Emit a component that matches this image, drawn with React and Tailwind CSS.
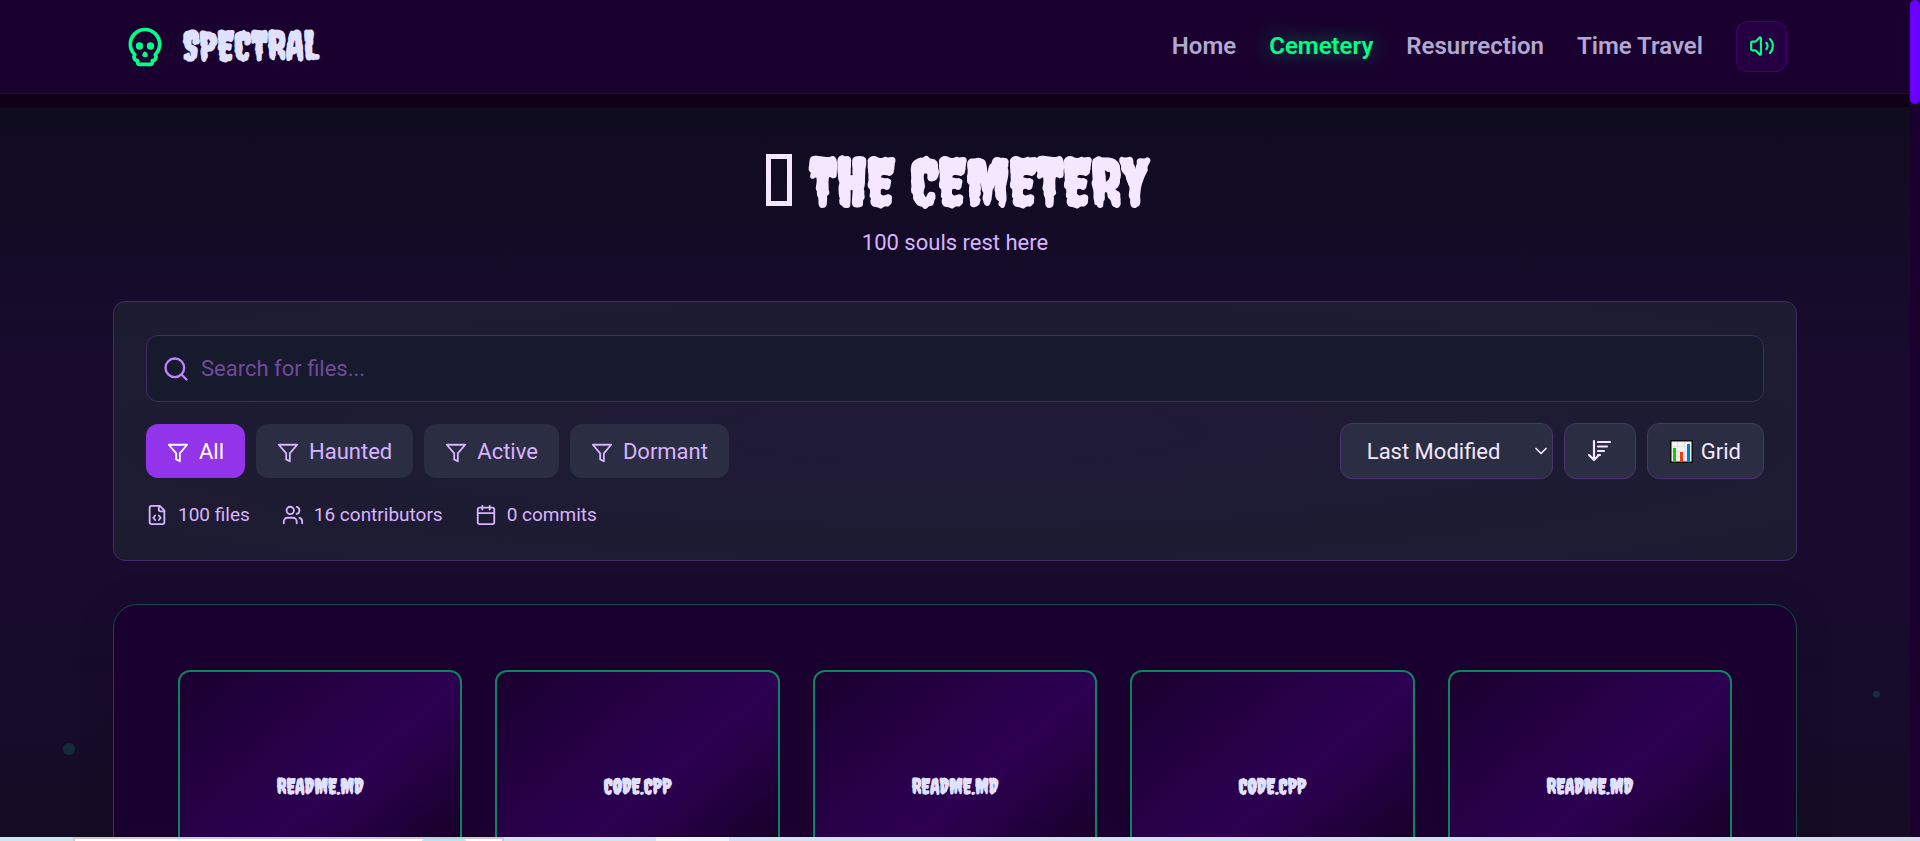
import { useState } from 'react';
import { LuSkull, LuVolume2, LuSearch, LuUsers, LuCalendar, LuFileCode, LuChevronDown } from 'react-icons/lu';

const navLinks = ['Home', 'Cemetery', 'Resurrection', 'Time Travel'];
const filters = ['All', 'Haunted', 'Active', 'Dormant'];
const stones = ['README.md', 'code.cpp', 'README.md', 'code.cpp', 'README.md'];

function FilterIcon() {
    return (
        <svg viewBox="0 0 24 24" className="mt-1 size-[22px]" fill="none" stroke="currentColor" strokeWidth="2" strokeLinecap="round" strokeLinejoin="round">
            <path d="M22 3H2l8 9.46V19l4 2v-8.54z" />
        </svg>
    );
}

function SortIcon() {
    return (
        <svg viewBox="0 0 24 24" className="size-6" fill="none" stroke="currentColor" strokeWidth="2.2" strokeLinecap="round" strokeLinejoin="round">
            <path d="M6 2v19M1 16l5 5 5-5M10 3h12M10 7.5h9M10 12h6M10 16h2" />
        </svg>
    );
}

function ChartIcon() {
    return (
        <svg viewBox="0 0 23 23" className="size-[23px]">
            <rect x="0.75" y="0.75" width="21.5" height="21.5" fill="#f2f2f2" stroke="#0c0c0c" strokeWidth="1.5" />
            <path d="M2 6.5h19M2 11.5h19M2 16.5h19M7.5 2v19M14.5 2v19" stroke="#e2e2e2" />
            <rect x="3" y="8" width="3" height="13.5" fill="#16c60c" />
            <rect x="10" y="12" width="3" height="9.5" fill="#f03a17" />
            <rect x="17" y="4" width="3" height="17.5" fill="#0078d7" />
        </svg>
    );
}

export default function App() {
    const [filter, setFilter] = useState('All');
    const [query, setQuery] = useState('');

    return (
        <div className="flex h-screen flex-col overflow-hidden bg-[#150c26] font-[Roboto,sans-serif] text-[22px] text-[#f3e8ff]">
            <div className="flex min-h-0 flex-1">
                <div className="relative flex min-w-0 flex-1 flex-col overflow-hidden bg-[linear-gradient(#0f0c1e_100px,#180b2e_360px,#180b2e_600px,#150c24_841px)]">
                    <span className="absolute bottom-[82px] left-[63px] size-3 rounded-full bg-[#122c38]" />
                    <span className="absolute right-[30px] bottom-[139px] size-[7px] rounded-full bg-[#122f3a]" />

                    <header className="border-b border-[#26063f] bg-[#1a002e] shadow-[0_13px_0_#0f0018]">
                        <div className="mx-auto flex h-[93px] max-w-[1684px] items-center justify-between px-[10px] pb-px">
                            <a href="#" className="flex items-center gap-4">
                                <LuSkull className="size-11 text-[#00ff88]" />
                                <span className="font-[Creepster,sans-serif] text-[40px] leading-none font-bold text-[#e0e0ff]">SPECTRAL</span>
                            </a>
                            <nav className="flex items-center gap-[33px] text-2xl font-semibold text-[#b0a8d0]">
                                {navLinks.map((link) => (
                                    <a
                                        key={link}
                                        href="#"
                                        className={link === 'Cemetery' ? 'text-[#00ff88] [text-shadow:0_0_20px_#00ff8880]' : ''}
                                    >
                                        {link}
                                    </a>
                                ))}
                                <button aria-label="Toggle sound" className="flex size-[51px] items-center justify-center rounded-xl border border-[#4b0082]/70 bg-[#250041] text-[#00ff88]">
                                    <LuVolume2 className="size-[26px]" />
                                </button>
                            </nav>
                        </div>
                    </header>

                    <main className="mx-auto w-full max-w-[1684px] pt-[55px]">
                        <div className="text-center">
                            <h1 className="flex justify-center gap-[18px] pl-1 font-[Creepster,sans-serif] text-[66px] leading-[66px] font-bold">
                                <span className="mt-[5px] h-[52px] w-[26px] border-[5px] border-[#f3e8ff]" />
                                THE CEMETERY
                            </h1>
                            <p className="mt-3 leading-8 text-[#d8b4fe]">100 souls rest here</p>
                        </div>

                        <section className="mt-[42px] rounded-xl border border-[#432a68] bg-[radial-gradient(ellipse,#1f1a37,#1c1c30)] px-8 pt-[33px] pb-[31px]">
                            <label className="flex h-[67px] items-center gap-[11px] rounded-xl border border-[#432a68] bg-[#17192c] px-[15px]">
                                <LuSearch className="size-7 text-[#c084fc]" />
                                <input
                                    type="text"
                                    aria-label="Search for files"
                                    value={query}
                                    onChange={(e) => setQuery(e.target.value)}
                                    placeholder="Search for files..."
                                    className="flex-1 bg-transparent outline-none placeholder:text-[#6f4b9b]"
                                />
                            </label>

                            <div className="mt-[21px] flex items-center justify-between">
                                <div className="flex gap-[11px]">
                                    {filters.map((name) => (
                                        <button
                                            key={name}
                                            onClick={() => setFilter(name)}
                                            className={
                                                filter === name
                                                    ? 'flex h-[54px] items-center gap-[10px] rounded-xl bg-[#9333ea] px-[21px] text-white'
                                                    : 'flex h-[54px] items-center gap-[10px] rounded-xl bg-[#2b2d43] px-[21px] text-[#d8b4fe]'
                                            }
                                        >
                                            <FilterIcon />
                                            {name}
                                        </button>
                                    ))}
                                </div>
                                <div className="flex gap-[11px]">
                                    <div className="relative">
                                        <select aria-label="Sort by" className="h-14 w-[213px] appearance-none rounded-xl border border-[#4c3370] bg-[#2b2d43] pl-[26px]">
                                            <option>Last Modified</option>
                                            <option>Name</option>
                                        </select>
                                        <LuChevronDown className="pointer-events-none absolute top-[18px] right-[2px] size-5" />
                                    </div>
                                    <button aria-label="Sort order" className="flex h-14 w-[72px] items-center justify-center rounded-xl border border-[#4c3370] bg-[#2b2d43]">
                                        <SortIcon />
                                    </button>
                                    <button className="flex h-14 items-center gap-2 rounded-xl border border-[#4c3370] bg-[#2b2d43] px-[22px]">
                                        <ChartIcon />
                                        Grid
                                    </button>
                                </div>
                            </div>

                            <div className="mt-[22px] flex gap-8 text-[19px] leading-7 text-[#d8b4fe]">
                                <span className="flex items-center gap-[10px]"><LuFileCode className="size-[22px]" />100 files</span>
                                <span className="flex items-center gap-[10px]"><LuUsers className="size-[22px]" />16 contributors</span>
                                <span className="flex items-center gap-[10px]"><LuCalendar className="size-[22px]" />0 commits</span>
                            </div>
                        </section>

                        <section className="mt-[43px] grid grid-cols-5 gap-[33px] rounded-3xl border border-[#124a48] bg-[#1a002e] px-16 py-[65px] shadow-[0_0_40px_#00000018]">
                            {stones.map((name, i) => (
                                <article key={i} className="h-[260px] rounded-xl border-2 border-[#0f8260] bg-[linear-gradient(140deg,#1a002e,#2d0052_50%,#150024_85%)] pt-[101px] text-center">
                                    <h2 className="font-[Creepster,sans-serif] text-[21px] leading-7 font-bold text-[#e0e0ff] uppercase">{name}</h2>
                                </article>
                            ))}
                        </section>
                    </main>
                </div>
                <div className="w-[10px] bg-[#1a002e]">
                    <div className="h-[104px] rounded-full bg-[#6a00ff]" />
                </div>
            </div>

            {/* edge of the window behind */}
            <div className="flex h-1 bg-linear-to-r from-[#cfe8ef] to-[#d6dcec]">
                <div className="ml-[73px] flex w-[431px] justify-end border-2 border-b-0 border-[#cccccc] bg-white pr-9">
                    <div className="w-11 rounded-t-full bg-[#a5eef5]" />
                </div>
                <div className="ml-[152px] w-[73px] bg-[#edf6fa]" />
            </div>
        </div>
    );
}
